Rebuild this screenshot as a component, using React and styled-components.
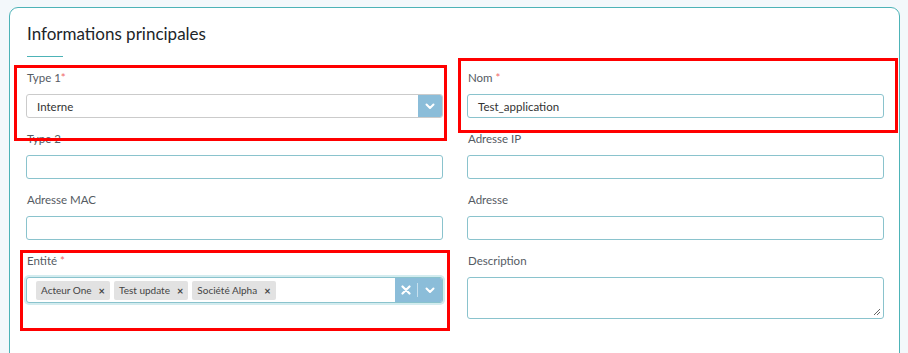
import React from "react";
import styled, { createGlobalStyle } from "styled-components";

const GlobalStyle = createGlobalStyle`
  body {
    margin: 0;
    background: #f3f8fb;
    font-family: Lato, "Open Sans", sans-serif;
  }
  * { box-sizing: border-box; }
`;

const Page = styled.div`
  padding: 7px 8px 0 9px;
  height: 353px;
  overflow: hidden;
`;

const Card = styled.div`
  position: relative;
  background: #fff;
  border: 1px solid #4db3b7;
  border-radius: 9px;
  padding: 16px 15px 40px 16px;
`;

const Title = styled.h2`
  margin: 0 0 0 1px;
  font-size: 17px;
  font-weight: 400;
  color: #212529;
  line-height: 20px;
`;

const TitleLine = styled.div`
  width: 36px;
  height: 1px;
  background: #4db3b7;
  margin: 12px 0 13px 1px;
`;

const Grid = styled.div`
  display: grid;
  grid-template-columns: 1fr 1fr;
  column-gap: 24px;
`;

const Field = styled.div`
  margin-bottom: 13px;
`;

const Label = styled.div`
  font-size: 11.5px;
  line-height: 16px;
  color: #555b63;
  margin-bottom: 8px;
  padding-left: 1px;
`;

const Star = styled.span`
  color: #f06a6a;
`;

const Input = styled.div`
  height: ${(p) => p.$h || 24}px;
  border: 1px solid ${(p) => (p.$grey ? "#cbcbcb" : "#8ac3cd")};
  border-radius: 3px;
  background: #fff;
  display: flex;
  align-items: center;
  font-size: 11.5px;
  color: #333;
  padding-left: 10px;
  position: relative;
  overflow: hidden;
`;

const Value = styled.span`
  flex: 1;
`;

const DropButton = styled.div`
  align-self: stretch;
  display: flex;
  align-items: center;
  background: #8bbdd9;
  color: #fff;
  padding: 0 6px;
  gap: 6px;
`;

const Sep = styled.div`
  width: 1px;
  height: 14px;
  background: #c7e0ee;
`;

const Multi = styled(Input)`
  height: 26px;
  padding-left: 9px;
  box-shadow: 0 0 0 2px #d3ecef;
  gap: 4px;
`;

const Tag = styled.span`
  display: inline-flex;
  align-items: center;
  height: 19px;
  background: #e2e2e2;
  border-radius: 2px;
  padding: 0 5px 0 5px;
  font-size: 10px;
  color: #444;
  gap: 7px;
`;

const TagX = styled.span`
  font-size: 11px;
  font-weight: 700;
  color: #444;
`;

const Grip = styled.svg`
  position: absolute;
  right: 2px;
  bottom: 2px;
`;

const Annotation = styled.div`
  position: absolute;
  border: 3px solid #ff0000;
  pointer-events: none;
`;

const Chevron = () => (
  <svg width="12" height="12" viewBox="0 0 12 12">
    <path d="M2.5 4.5 L6 8 L9.5 4.5" fill="none" stroke="#fff" strokeWidth="2" strokeLinecap="round" strokeLinejoin="round" />
  </svg>
);

const Cross = () => (
  <svg width="10" height="10" viewBox="0 0 10 10">
    <path d="M1.5 1.5 L8.5 8.5 M8.5 1.5 L1.5 8.5" fill="none" stroke="#fff" strokeWidth="2.2" strokeLinecap="round" />
  </svg>
);

const App = () => {
  const tags = ["Acteur One", "Test update", "Société Alpha"];
  return (
    <Page>
      <GlobalStyle />
      <Card>
        <Title>Informations principales</Title>
        <TitleLine />
        <Grid>
          <Field>
            <Label>
              Type 1<Star>*</Star>
            </Label>
            <Input $grey>
              <Value>Interne</Value>
              <DropButton>
                <Chevron />
              </DropButton>
            </Input>
          </Field>
          <Field>
            <Label>
              Nom <Star>*</Star>
            </Label>
            <Input>Test_application</Input>
          </Field>
          <Field>
            <Label>Type 2</Label>
            <Input />
          </Field>
          <Field>
            <Label>Adresse IP</Label>
            <Input />
          </Field>
          <Field>
            <Label>Adresse MAC</Label>
            <Input />
          </Field>
          <Field>
            <Label>Adresse</Label>
            <Input />
          </Field>
          <Field>
            <Label>
              Entité <Star>*</Star>
            </Label>
            <Multi>
              {tags.map((t) => (
                <Tag key={t}>
                  {t}
                  <TagX>×</TagX>
                </Tag>
              ))}
              <Value />
              <DropButton>
                <Cross />
                <Sep />
                <Chevron />
              </DropButton>
            </Multi>
          </Field>
          <Field>
            <Label>Description</Label>
            <Input $h={42}>
              <Grip width="8" height="8" viewBox="0 0 8 8">
                <path d="M7 1 L1 7 M7 4 L4 7" stroke="#666" strokeWidth="1" />
              </Grip>
            </Input>
          </Field>
        </Grid>
        <Annotation style={{ left: 4, top: 57, width: 433, height: 76 }} />
        <Annotation style={{ left: 448, top: 50, width: 440, height: 75 }} />
        <Annotation style={{ left: 10, top: 242, width: 430, height: 81 }} />
      </Card>
    </Page>
  );
};

export default App;
